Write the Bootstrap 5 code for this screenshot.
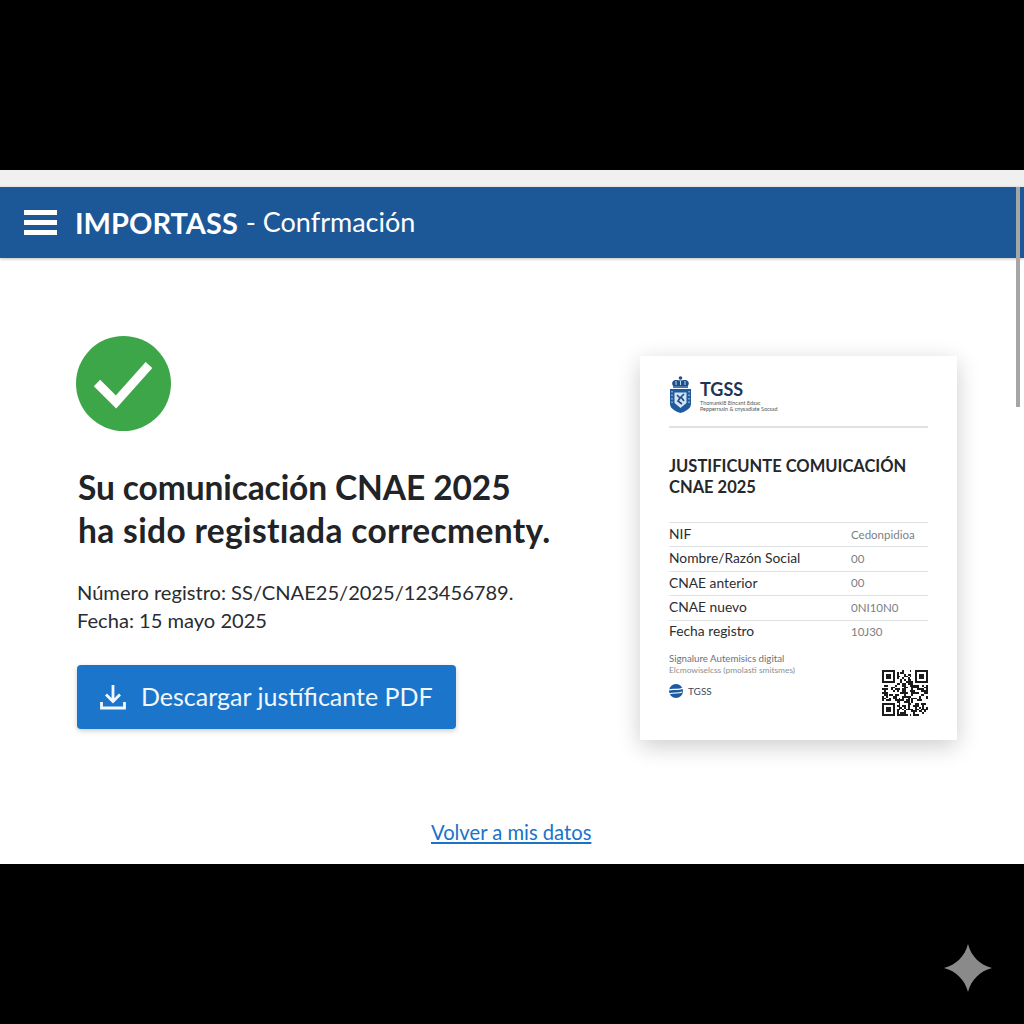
<!DOCTYPE html>
<html lang="es">
<head>
  <meta charset="UTF-8" />
  <meta name="viewport" content="width=device-width, initial-scale=1.0"/>
  <title>IMPORTASS - Confirmación</title>
  <link href="https://cdn.jsdelivr.net/npm/bootstrap@5.3.0/dist/css/bootstrap.min.css" rel="stylesheet"/>
  <style>
    html, body { background: #000; overflow: hidden; }
    body { font-family: Lato, "Liberation Sans", sans-serif; color: #212326; }
    .black-top { height: 170px; }
    .black-bottom { height: 160px; padding: 79px 31px 0 0; }
    .screen { height: 694px; background: #fff; position: relative; }
    .top-strip { height: 17px; background: #f0f0f0; }
    .app-bar { height: 71px; background: #1c5797; padding-left: 24px; box-shadow: 0 1px 3px rgba(0,0,0,.25); color: #fff; }
    .app-bar b { font-size: 29px; font-weight: 700; margin-left: 18px; }
    .app-bar span { font-size: 27px; font-weight: 400; margin-left: 8px; }
    .scroll-thumb { position: absolute; top: 17px; right: 4px; width: 4px; height: 220px; background: #a6a6a6; }
    .main-area { height: 606px; padding: 78px 67px 0 77px; }
    .left-col { width: 480px; }
    .ok-circle { margin-left: -1px; display: block; }
    .head-text { font-size: 33.5px; line-height: 43px; font-weight: 700; margin: 35px 0 0 1px; white-space: nowrap; letter-spacing: -.1px; }
    .head-wide { letter-spacing: .35px; }
    .info-text { font-size: 20.1px; line-height: 28px; margin: 26px 0 0; color: #2a2c2f; white-space: nowrap; }
    .pdf-btn { width: 379px; height: 64px; margin-top: 31px; background: #1b75cb; border: 0; border-radius: 4px; color: #f2f7fc; font-size: 25px; box-shadow: 0 2px 5px rgba(0,0,0,.2); gap: 15px; padding: 0 0 0 23px; }
    .doc-card { width: 317px; height: 384px; margin-top: 20px; padding: 20px 29px 0; border: 0; border-radius: 0; background: #fff; box-shadow: 0 6px 22px rgba(0,0,0,.2); }
    .doc-logo { height: 52px; border-bottom: 2px solid #dfe2e5; padding-bottom: 12px; }
    .doc-logo-name { font-size: 18px; line-height: 18px; font-weight: 700; color: #1d3557; }
    .doc-logo-sub { font-size: 5.4px; line-height: 6px; color: #555; white-space: nowrap; }
    .doc-logo-name + .doc-logo-sub { margin-top: 2px; }
    .doc-title { font-size: 16.5px; line-height: 21px; font-weight: 700; margin: 28px 0 24px; color: #25272a; white-space: nowrap; }
    .doc-row { height: 24.4px; padding-bottom: 1px; border-top: 1px solid #dfe2e5; font-size: 13.8px; color: #2b2d30; }
    .doc-row:last-of-type { border-bottom: 1px solid #dfe2e5; height: 25px; }
    .doc-val { width: 77px; font-size: 11.5px; color: #7b7f84; white-space: nowrap; }
    .doc-foot { margin-top: 8px; }
    .sign-line { font-size: 9.7px; line-height: 12px; color: #6d7176; white-space: nowrap; }
    .sign-sub { font-size: 8.4px; line-height: 12px; color: #8b8f94; white-space: nowrap; }
    .tgss-mini { margin-top: 8px; font-size: 10px; color: #3c4a5a; gap: 5px; }
    .back-link { font-size: 20.2px; line-height: 28px; color: #1a73c8; position: absolute; bottom: 18px; left: 431px; }
    .qr-box { margin-top: 18px; }
  </style>
</head>
<body>
  <div class="black-top"></div>

  <div class="screen">
    <div class="top-strip"></div>
    <div class="app-bar d-flex align-items-center">
      <svg width="33" height="25" viewBox="0 0 33 25" fill="#fff"><rect y="0" width="33" height="5"/><rect y="10" width="33" height="5"/><rect y="20" width="33" height="5"/></svg>
      <b>IMPORTASS</b><span>- Confrmación</span>
    </div>
    <div class="scroll-thumb"></div>

    <div class="main-area d-flex justify-content-between">
      <div class="left-col">
        <svg class="ok-circle" width="95" height="95" viewBox="0 0 95 95">
          <circle cx="47.5" cy="47.5" r="47.5" fill="#3da648"/>
          <path d="M21 47 L40 66 L73 29" fill="none" stroke="#fff" stroke-width="9"/>
        </svg>
        <h1 class="head-text">Su comunicación CNAE 2025<br><span class="head-wide">ha sido registıada correcmenty.</span></h1>
        <p class="info-text">Número registro: SS/CNAE25/2025/123456789.<br>Fecha: 15 mayo 2025</p>
        <button type="button" class="btn pdf-btn d-flex align-items-center">
          <svg width="26" height="26" viewBox="0 0 26 26" fill="none" stroke="#f2f7fc" stroke-width="2.8"><path d="M13 1 V17 M6 10.5 L13 17.5 L20 10.5"/><path d="M1.5 18 V24 H24.5 V18"/></svg>
          <span>Descargar justíficante PDF</span>
        </button>
      </div>

      <div class="card doc-card">
        <div class="doc-logo d-flex align-items-start gap-2">
          <svg width="23" height="37" viewBox="0 0 23 37">
            <path d="M4 10 C1 4 7 3 11.5 4.5 C16 3 22 4 19 10 Z" fill="#1d4f8c"/>
            <path d="M7 5 V9 M11.5 5 V9 M16 5 V9" stroke="#dbe6f2" stroke-width=".9"/>
            <circle cx="11.5" cy="2" r="1.8" fill="#1d4f8c"/>
            <rect x="4" y="10" width="15" height="2" fill="#4a78ad"/>
            <path d="M1 13 H22 V28 C22 33 15 36 11.5 37 C8 36 1 33 1 28 Z" fill="#1d5aa0"/>
            <path d="M5.5 16.5 H17.5 V27 L11.5 32 L5.5 27 Z" fill="#d5e3f2"/>
            <path d="M8 19 L11 22 L9 25 L13 28 M15 18 L12 21 L15 25" stroke="#1d4f8c" stroke-width="1.7" fill="none"/>
            <path d="M3 15 V29 M20 15 V29" stroke="#d5e3f2" stroke-width="1" stroke-dasharray="1.5 2"/>
          </svg>
          <div>
            <div class="doc-logo-name mt-1">TGSS</div>
            <div class="doc-logo-sub">Thomanki8 8incant 8dsac</div>
            <div class="doc-logo-sub">Pepperrsaln &amp; cnysadiate Socsad</div>
          </div>
        </div>

        <h2 class="doc-title">JUSTIFICUNTE COMUICACIÓN<br>CNAE 2025</h2>

        <div class="doc-row d-flex align-items-center justify-content-between"><span>NIF</span><span class="doc-val">Cedonpidioa</span></div>
        <div class="doc-row d-flex align-items-center justify-content-between"><span>Nombre/Razón Social</span><span class="doc-val">00</span></div>
        <div class="doc-row d-flex align-items-center justify-content-between"><span>CNAE anterior</span><span class="doc-val">00</span></div>
        <div class="doc-row d-flex align-items-center justify-content-between"><span>CNAE nuevo</span><span class="doc-val">0NI10N0</span></div>
        <div class="doc-row d-flex align-items-center justify-content-between"><span>Fecha registro</span><span class="doc-val">10J30</span></div>

        <div class="doc-foot d-flex justify-content-between">
          <div>
            <div class="sign-line">Signalure Autemisics digital</div>
            <div class="sign-sub">Elcmowiselcss (pmolasti smitsmes)</div>
            <div class="tgss-mini d-flex align-items-center">
              <svg width="14" height="14" viewBox="0 0 14 14"><circle cx="7" cy="7" r="7" fill="#1d5aa0"/><path d="M0 6 C4 4 9 7 14 4 M0 10 C5 8 9 10 13 8" stroke="#fff" stroke-width="1.2" fill="none"/></svg>
              <span>TGSS</span>
            </div>
          </div>
          <svg id="qrCode" class="qr-box" width="46" height="46" viewBox="0 0 25 25" fill="#1c1c1c" shape-rendering="crispEdges"></svg>
        </div>
      </div>
    </div>

    <a class="back-link" href="#">Volver a mis datos</a>
  </div>

  <div class="black-bottom d-flex justify-content-end">
    <svg width="50" height="50" viewBox="0 0 50 50"><path d="M25 1 C28 13 37 22 49 25 C37 28 28 37 25 49 C22 37 13 28 1 25 C13 22 22 13 25 1 Z" fill="#8a8a8a"/></svg>
  </div>

  <script src="https://cdn.jsdelivr.net/npm/bootstrap@5.3.0/dist/js/bootstrap.bundle.min.js"></script>
  <script>
    // QR de adorno: tres cuadros fijos y el resto pseudoaleatorio
    const qr = document.getElementById("qrCode");
    let seed = 77, cells = "";
    function inFinder(x, y) {
      return (x < 8 && y < 8) || (x > 16 && y < 8) || (x < 8 && y > 16);
    }
    for (let y = 0; y < 25; y++) {
      for (let x = 0; x < 25; x++) {
        seed = (seed * 137 + 59) % 2311;
        if (!inFinder(x, y) && seed % 100 < 52) cells += `<rect x="${x}" y="${y}" width="1" height="1"/>`;
      }
    }
    [[0, 0], [18, 0], [0, 18]].forEach(([x, y]) => {
      cells += `<path d="M${x} ${y}h7v7h-7z M${x + 1} ${y + 1}v5h5v-5z" fill-rule="evenodd"/><rect x="${x + 2}" y="${y + 2}" width="3" height="3"/>`;
    });
    qr.innerHTML = cells;
  </script>
</body>
</html>
